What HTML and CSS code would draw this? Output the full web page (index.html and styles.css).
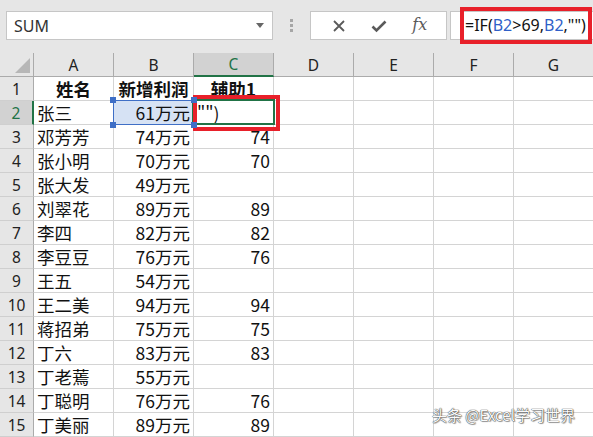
FILE: index.html
```html
<!DOCTYPE html>
<html lang="zh">
<head>
<meta charset="utf-8">
<link rel="stylesheet" href="styles.css">
</head>
<body>
<div class="page">
  <div class="toolbar">
    <div class="namebox"><span class="name">SUM</span><span class="caret"></span></div>
    <div class="dots"><i></i><i></i><i></i></div>
    <div class="fxbox">
      <svg class="ico" width="14" height="14" viewBox="0 0 14 14"><path d="M2 2 L12 12 M12 2 L2 12" stroke="#5a5a5a" stroke-width="1.8" fill="none"/></svg>
      <svg class="ico" width="16" height="14" viewBox="0 0 16 14"><path d="M1.5 7.5 L5.5 11.5 L14.5 2.5" stroke="#5a5a5a" stroke-width="2.6" fill="none"/></svg>
      <span class="fx">fx</span>
    </div>
    <div class="formula">=IF(<span class="ref">B2</span>&gt;69,<span class="ref">B2</span>,"")</div>
  </div>
  <div class="sheet">
    <div class="corner"><span class="tri"></span></div>
    <div class="ch">A</div><div class="ch">B</div><div class="ch sel">C</div><div class="ch">D</div><div class="ch">E</div><div class="ch">F</div><div class="ch">G</div>

    <div class="rh">1</div><div class="c b">姓名</div><div class="c b">新增利润</div><div class="c b">辅助1</div><div class="c"></div><div class="c"></div><div class="c"></div><div class="c"></div>
    <div class="rh sel">2</div><div class="c t">张三</div><div class="c n refcell">61万元<span class="h h1"></span><span class="h h2"></span><span class="h h3"></span><span class="h h4"></span></div><div class="c t active">"")</div><div class="c"></div><div class="c"></div><div class="c"></div><div class="c"></div>
    <div class="rh">3</div><div class="c t">邓芳芳</div><div class="c n">74万元</div><div class="c n">74</div><div class="c"></div><div class="c"></div><div class="c"></div><div class="c"></div>
    <div class="rh">4</div><div class="c t">张小明</div><div class="c n">70万元</div><div class="c n">70</div><div class="c"></div><div class="c"></div><div class="c"></div><div class="c"></div>
    <div class="rh">5</div><div class="c t">张大发</div><div class="c n">49万元</div><div class="c n"></div><div class="c"></div><div class="c"></div><div class="c"></div><div class="c"></div>
    <div class="rh">6</div><div class="c t">刘翠花</div><div class="c n">89万元</div><div class="c n">89</div><div class="c"></div><div class="c"></div><div class="c"></div><div class="c"></div>
    <div class="rh">7</div><div class="c t">李四</div><div class="c n">82万元</div><div class="c n">82</div><div class="c"></div><div class="c"></div><div class="c"></div><div class="c"></div>
    <div class="rh">8</div><div class="c t">李豆豆</div><div class="c n">76万元</div><div class="c n">76</div><div class="c"></div><div class="c"></div><div class="c"></div><div class="c"></div>
    <div class="rh">9</div><div class="c t">王五</div><div class="c n">54万元</div><div class="c n"></div><div class="c"></div><div class="c"></div><div class="c"></div><div class="c"></div>
    <div class="rh">10</div><div class="c t">王二美</div><div class="c n">94万元</div><div class="c n">94</div><div class="c"></div><div class="c"></div><div class="c"></div><div class="c"></div>
    <div class="rh">11</div><div class="c t">蒋招弟</div><div class="c n">75万元</div><div class="c n">75</div><div class="c"></div><div class="c"></div><div class="c"></div><div class="c"></div>
    <div class="rh">12</div><div class="c t">丁六</div><div class="c n">83万元</div><div class="c n">83</div><div class="c"></div><div class="c"></div><div class="c"></div><div class="c"></div>
    <div class="rh">13</div><div class="c t">丁老蔫</div><div class="c n">55万元</div><div class="c n"></div><div class="c"></div><div class="c"></div><div class="c"></div><div class="c"></div>
    <div class="rh">14</div><div class="c t">丁聪明</div><div class="c n">76万元</div><div class="c n">76</div><div class="c"></div><div class="c"></div><div class="c"></div><div class="c"></div>
    <div class="rh">15</div><div class="c t">丁美丽</div><div class="c n">89万元</div><div class="c n">89</div><div class="c"></div><div class="c"></div><div class="c"></div><div class="c"></div>
  </div>
  <div class="mark mark-formula"></div>
  <div class="mark mark-cell"></div>
  <div class="watermark">头条 @Excel学习世界</div>
</div>
</body>
</html>
```

FILE: styles.css
```css
* { box-sizing: border-box; }
html, body { margin: 0; padding: 0; background: #fff; }
.page { position: relative; width: 593px; height: 437px; overflow: hidden; font-family: "Noto Sans CJK SC", "Noto Sans", sans-serif; }

.toolbar { height: 53px; background: #e6e6e6; display: flex; align-items: flex-start; padding-top: 11px; }
.namebox { margin-left: 6px; width: 267px; height: 29px; background: #fff; border: 1px solid #c6c6c6; display: flex; align-items: center; justify-content: space-between; padding: 0 8px 0 7px; }
.name { font-family: "Noto Sans", sans-serif; font-size: 16px; color: #333; }
.caret { width: 0; height: 0; border-left: 4px solid transparent; border-right: 4px solid transparent; border-top: 5px solid #666; }
.dots { width: 37px; height: 29px; display: flex; flex-direction: column; align-items: center; justify-content: center; gap: 2px; }
.dots i { display: block; width: 3px; height: 3px; background: #a6a6a6; }
.fxbox { width: 137px; height: 29px; background: #fff; border: 1px solid #c6c6c6; display: flex; align-items: center; justify-content: space-around; padding: 0 6px 0 8px; }
.ico { display: block; }
.fx { font-family: "DejaVu Serif", "Liberation Serif", serif; font-style: italic; font-size: 16px; color: #5a5a5a; margin-top: -2px; }
.formula { margin-left: 3px; flex: 1; height: 29px; background: #fff; border: 1px solid #c6c6c6; border-right: none; font-family: "Noto Sans", sans-serif; font-size: 16px; color: #111; padding-left: 14px; line-height: 27px; white-space: nowrap; }
.ref { color: #2f5fc8; }

.sheet { display: grid; grid-template-columns: 34px repeat(7, 80px); grid-auto-rows: 24px; }
.corner { background: #e6e6e6; border-right: 1px solid #ababab; border-bottom: 1px solid #ababab; position: relative; }
.tri { position: absolute; right: 3px; bottom: 3px; width: 0; height: 0; border-left: 15px solid transparent; border-bottom: 15px solid #b7b7b7; }
.ch { background: #e6e6e6; border-right: 1px solid #ababab; border-bottom: 1px solid #ababab; display: flex; align-items: center; justify-content: center; font-family: "Noto Sans", sans-serif; font-size: 15.5px; color: #222; }
.ch.sel { background: #d2d2d2; color: #217346; border-bottom: 2px solid #217346; }
.rh { background: #e6e6e6; border-right: 1px solid #ababab; border-bottom: 1px solid #cfcfcf; display: flex; align-items: center; justify-content: center; font-family: "Noto Sans", sans-serif; font-size: 15.5px; color: #222; }
.rh.sel { background: #d2d2d2; color: #217346; border-right: 2px solid #217346; }

.c { border-right: 1px solid #d4d4d4; border-bottom: 1px solid #d4d4d4; font-size: 17.5px; color: #111; display: flex; align-items: center; white-space: nowrap; line-height: 1; }
.c.t { padding-left: 3px; }
.c.n { justify-content: flex-end; padding-right: 3px; }
.c.b { justify-content: center; font-weight: bold; }

.refcell { position: relative; background: #d6e2f4; }
.refcell::after { content: ""; position: absolute; left: -1px; top: -1px; right: -1px; bottom: -1px; border: 1px solid #3f6fc6; }
.h { position: absolute; width: 6px; height: 6px; background: #3f6fc6; z-index: 2; }
.h1 { left: -4px; top: -4px; }
.h2 { right: -4px; top: -4px; }
.h3 { left: -4px; bottom: -4px; }
.h4 { right: -4px; bottom: -4px; }

.active { position: relative; overflow: visible; padding-left: 4px; }
.active::after { content: ""; position: absolute; left: -2px; top: -2px; right: -2px; bottom: -1px; border: 2px solid #217346; }

.mark { position: absolute; border: 4px solid #e8202a; }
.mark-formula { left: 460px; top: 7px; width: 132px; height: 37px; }
.mark-cell { left: 193px; top: 95px; width: 87px; height: 36px; }

.watermark { position: absolute; left: 432px; top: 404px; font-size: 15px; color: #fafafa; white-space: nowrap; text-shadow: 0 0 1px #333, 0 0 1px #333, 1px 1px 1px rgba(0,0,0,0.35); }
```
